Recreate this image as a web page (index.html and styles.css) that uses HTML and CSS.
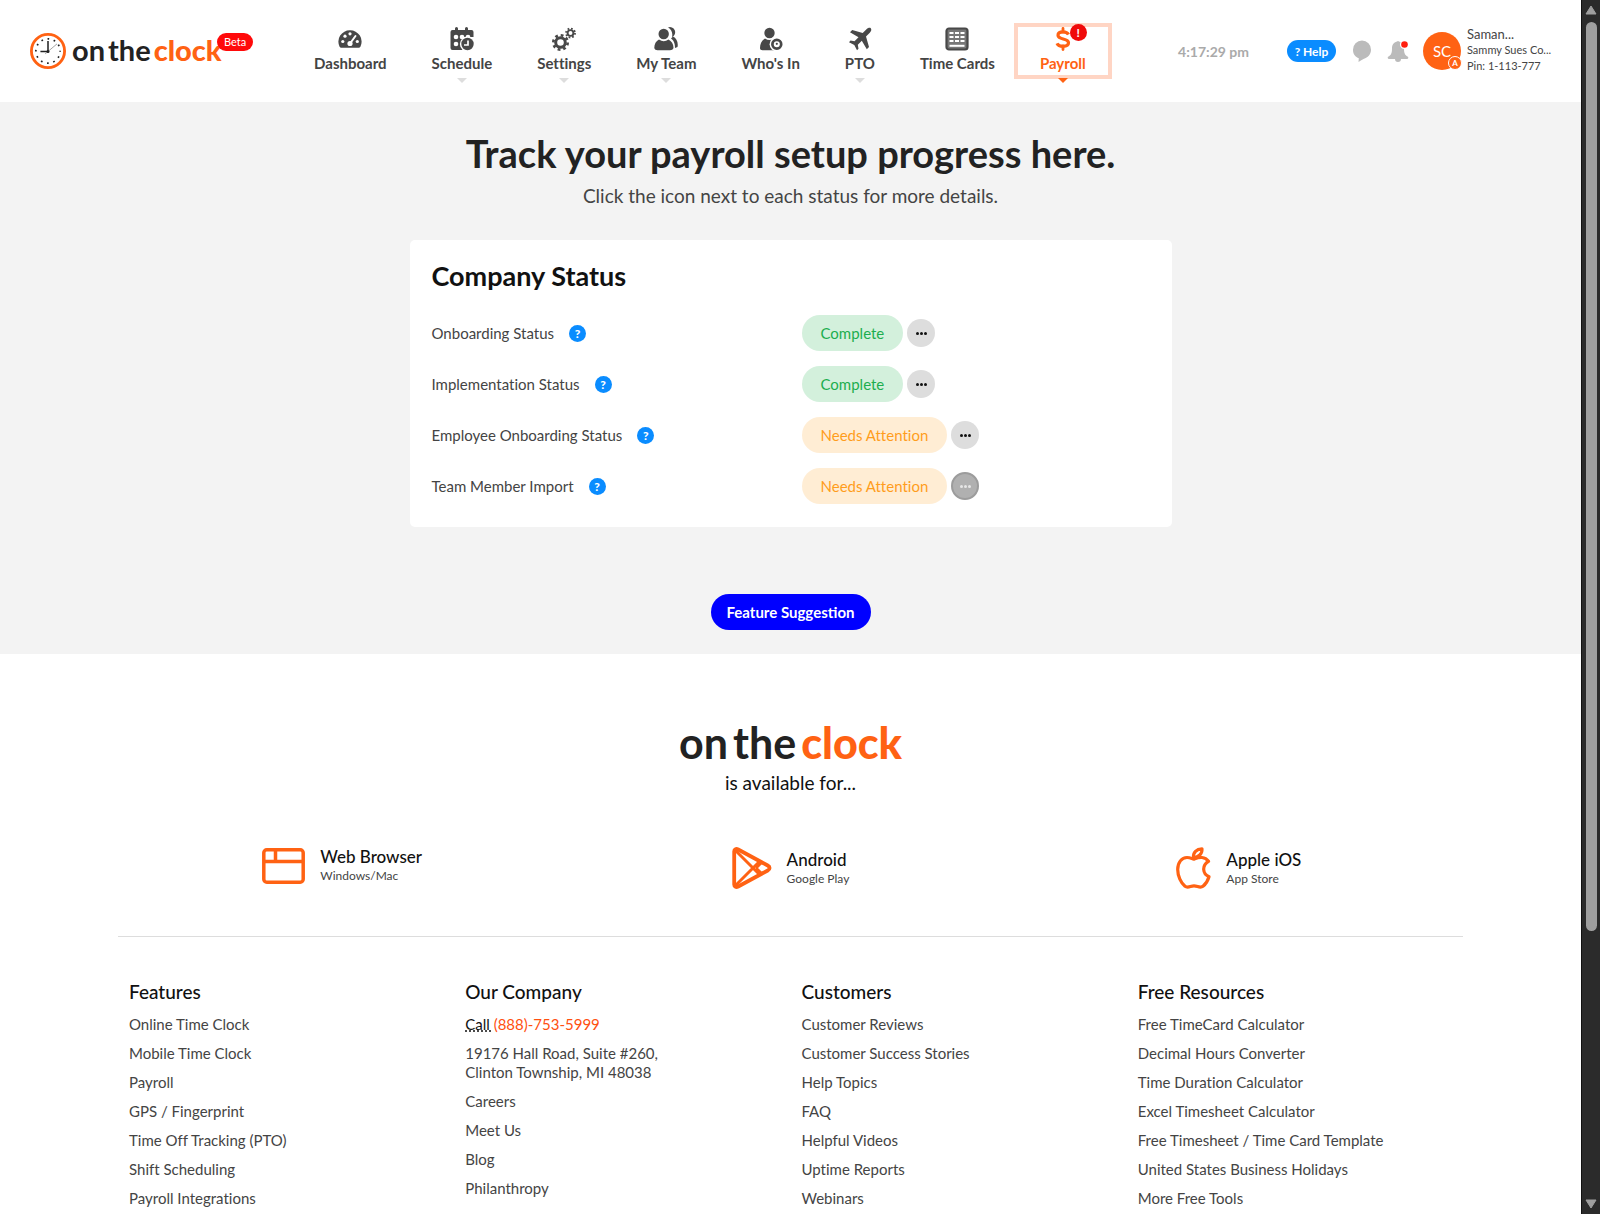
FILE: index.html
```html
<!DOCTYPE html>
<html lang="en">
<head>
    <meta charset="UTF-8">
    <meta name="viewport" content="width=device-width, initial-scale=1.0">
    <title>OnTheClock - Payroll</title>
    <link rel="stylesheet" href="styles.css">
</head>
<body>
    <div class="page">
        <header class="header">
            <a href="#" class="logo">
                <svg class="logo-clock" viewBox="0 0 38 38">
                    <circle cx="19" cy="19" r="17.5" fill="#fff" stroke="#ff6213" stroke-width="3"/>
                    <circle cx="19" cy="19" r="12.8" fill="none" stroke="#222" stroke-width="1.8" stroke-dasharray="1.8 4.902" stroke-dashoffset="0.9"/>
                    <path d="M19 20V8.500M20 19.500H11" fill="none" stroke="#222" stroke-width="1.6"/>
                    <path d="M16 22L28.500 11.500" stroke="#888" stroke-width="0.8"/>
                    <circle cx="19" cy="19.500" r="1.600" fill="#222"/>
                </svg>
                <span class="wordmark"><span>on</span> <span>the</span> <b>clock</b></span>
                <span class="beta">Beta</span>
            </a>

            <nav class="nav">
                <a href="#" class="nav-item">
                    <svg viewBox="0 0 24 24">
                        <path d="M3.300 20.800a2 2 0 0 1-1.700-1A11.400 11.400 0 0 1 12 3.300 11.400 11.400 0 0 1 22.400 19.800a2 2 0 0 1-1.700 1z" fill="#484848"/>
                        <g fill="#fff"><circle cx="4.800" cy="14.500" r="1.600"/><circle cx="7" cy="9.200" r="1.600"/><circle cx="12" cy="6.800" r="1.600"/><circle cx="19.300" cy="14.500" r="1.600"/><circle cx="12" cy="16.500" r="2.600"/></g>
                        <path d="M12 16.500L17.500 9" stroke="#fff" stroke-width="2" stroke-linecap="round"/>
                    </svg>
                    <span>Dashboard</span>
                </a>
                <a href="#" class="nav-item has-menu">
                    <svg viewBox="0 0 24 24">
                        <path d="M2.500 3H5V1.500a1.500 1.500 0 0 1 3 0V3h7V1.500a1.500 1.500 0 0 1 3 0V3h3.500A2 2 0 0 1 23.500 5v5H.5V5a2 2 0 0 1 2-2zM.5 9h12v14h-10a2 2 0 0 1-2-2z" fill="#484848"/>
                        <g fill="#fff"><circle cx="6" cy="10" r="2.300"/><circle cx="12" cy="10" r="2.300"/><circle cx="6" cy="17" r="2.300"/><circle cx="18" cy="10" r="2.300"/></g>
                        <circle cx="17.500" cy="17" r="7.600" fill="#fff"/>
                        <circle cx="17.500" cy="17" r="6.200" fill="#484848"/>
                        <path d="M18 13.500V18H14" fill="none" stroke="#fff" stroke-width="1.700"/>
                    </svg>
                    <span>Schedule</span>
                </a>
                <a href="#" class="nav-item has-menu">
                    <svg viewBox="0 0 24 24" fill="none" stroke="#484848">
                        <circle cx="8.500" cy="15.500" r="4.800" stroke-width="3"/>
                        <circle cx="8.500" cy="15.500" r="7.200" stroke-width="2.600" stroke-dasharray="2.800 2.855"/>
                        <circle cx="18.500" cy="6" r="2.900" stroke-width="1.900"/>
                        <circle cx="18.500" cy="6" r="4.500" stroke-width="1.800" stroke-dasharray="1.700 1.834"/>
                    </svg>
                    <span>Settings</span>
                </a>
                <a href="#" class="nav-item has-menu">
                    <svg viewBox="0 0 24 24" fill="#484848">
                        <path d="M14 .5a5 5 0 0 1 4 9.500c1-4-.5-7.500-4-9.500zM19 9.500c3.500 1.500 5.500 6 4.500 10.500l-2.500 1c0-3-.5-7-4-9.500z"/>
                        <circle cx="9.700" cy="7" r="5.200"/>
                        <path d="M5 12.500a8 8 0 0 0 9.500 0c3 1.500 5 4.500 5 8.500-.5 1.500-2 2.200-3.500 2.200H3.500C2 23.200.7 22.500.3 21c0-4 1.700-7 4.700-8.500z"/>
                    </svg>
                    <span>My Team</span>
                </a>
                <a href="#" class="nav-item">
                    <svg viewBox="0 0 24 24">
                        <g fill="#484848">
                            <circle cx="10.500" cy="6" r="5.200"/>
                            <path d="M6 11.500a8 8 0 0 0 9 0l3 2v9.700H3.500C2 23.200 1 22.500 1 21c0-4 2-8 5-9.500z"/>
                        </g>
                        <circle cx="17.800" cy="17.200" r="7.200" fill="#fff"/>
                        <circle cx="17.800" cy="17.200" r="4.400" fill="none" stroke="#484848" stroke-width="2.700"/>
                        <circle cx="17.800" cy="16.800" r="1.100" fill="#484848"/>
                    </svg>
                    <span>Who's In</span>
                </a>
                <a href="#" class="nav-item has-menu">
                    <svg viewBox="0 0 24 24">
                        <path d="M22.800 1.200c1 1.200.4 3-1 4.500L18 9.500 21 20l-2.200 2.200-5-8.500-4 4 .7 4L9 23.300 6.300 18 1 15.300 2.500 13.500l4 .8 4-4L2 5.200 4.200 3 14.700 6l3.800-3.800c1.400-1.400 3.200-2 4.300-1z" fill="#484848"/>
                    </svg>
                    <span>PTO</span>
                </a>
                <a href="#" class="nav-item">
                    <svg viewBox="0 0 24 24">
                        <rect x="1.500" y="1.500" width="21" height="21" rx="2.500" fill="#777" stroke="#484848" stroke-width="2.200"/>
                        <path d="M4.500 6h15M4.500 10h15M4.500 14h15" stroke="#fff" stroke-width="2.200" stroke-dasharray="4 1.500"/>
                        <path d="M4.500 18.800h15" stroke="#fff" stroke-width="2"/>
                    </svg>
                    <span>Time Cards</span>
                </a>
                <a href="#" class="nav-item has-menu active">
                    <svg viewBox="0 0 24 24" fill="none" stroke="#ff6213">
                        <path d="M17.500 7.500C16.500 5.500 14.500 4.800 12 4.800c-3 0-5 1.300-5 3.500 0 5 10.500 2.300 10.500 7.500 0 2.200-2.300 3.500-5.500 3.500-2.800 0-5-.8-6-3" stroke-width="3.200"/>
                        <path d="M12 1.500V5M12 19v3.500" stroke-width="2.800" stroke-linecap="round"/>
                    </svg>
                    <span>Payroll</span>
                    <span class="alert">!</span>
                </a>
            </nav>

            <div class="account">
                <time class="clock">4:17:29 pm</time>
                <button class="help" type="button">? Help</button>
                <button class="icon-button" type="button" aria-label="Chat">
                    <svg viewBox="0 0 22 24" fill="#bbb"><path d="M11 1.500a9 9 0 0 1 9 9.300c0 5-3.500 7.700-7 9-2 1-3.500 2-5.500 3.200l.3-3.800C4.500 18 2 15.500 2 10.800A9 9 0 0 1 11 1.500z"/></svg>
                </button>
                <button class="icon-button" type="button" aria-label="Notifications">
                    <svg viewBox="0 0 22 24"><path d="M10 2.500a1.500 1.500 0 0 1 2 0c3.500.8 5 3.500 5 7 0 5 1 6.500 3.500 8a1.300 1.300 0 0 1-.5 2.500h-6a3 3 0 0 1-6 0H2a1.300 1.300 0 0 1-.5-2.500c2.500-1.500 3.500-3 3.500-8 0-3.500 1.500-6.200 5-7z" fill="#bbb"/><circle cx="17.500" cy="5.500" r="4.500" fill="#fff"/><circle cx="17.500" cy="5.500" r="3.300" fill="#ff1e0e"/></svg>
                </button>
                <a href="#" class="user">
                    <span class="avatar">SC<span class="avatar-badge">A</span></span>
                    <span class="user-text">
                        <span class="user-name">Saman...</span>
                        <span>Sammy Sues Co...</span>
                        <span>Pin: 1-113-777</span>
                    </span>
                </a>
            </div>
        </header>

        <main class="main">
            <h1>Track your payroll setup progress here.</h1>
            <p class="subtitle">Click the icon next to each status for more details.</p>

            <section class="card">
                <h2>Company Status</h2>
                <div class="status-row">
                    <div class="status-label">Onboarding Status <button class="tip" type="button">?</button></div>
                    <span class="pill complete">Complete</span>
                    <button class="more" type="button" aria-label="Details"><i></i><i></i><i></i></button>
                </div>
                <div class="status-row">
                    <div class="status-label">Implementation Status <button class="tip" type="button">?</button></div>
                    <span class="pill complete">Complete</span>
                    <button class="more" type="button" aria-label="Details"><i></i><i></i><i></i></button>
                </div>
                <div class="status-row">
                    <div class="status-label">Employee Onboarding Status <button class="tip" type="button">?</button></div>
                    <span class="pill attention">Needs Attention</span>
                    <button class="more" type="button" aria-label="Details"><i></i><i></i><i></i></button>
                </div>
                <div class="status-row">
                    <div class="status-label">Team Member Import <button class="tip" type="button">?</button></div>
                    <span class="pill attention">Needs Attention</span>
                    <button class="more pressed" type="button" aria-label="Details"><i></i><i></i><i></i></button>
                </div>
            </section>

            <button class="suggest" type="button">Feature Suggestion</button>
        </main>

        <footer class="footer">
            <div class="wordmark wordmark-large"><span>on</span> <span>the</span> <b>clock</b></div>
            <p class="available">is available for...</p>

            <div class="platforms">
                <a href="#" class="platform">
                    <svg class="browser-icon" viewBox="0 0 43 36" fill="none" stroke="#ff6213" stroke-width="3.500">
                        <rect x="1.800" y="1.800" width="39.400" height="32.400" rx="3"/>
                        <path d="M2 13.500h39M13.500 2v11"/>
                    </svg>
                    <span><strong>Web Browser</strong><small>Windows/Mac</small></span>
                </a>
                <a href="#" class="platform">
                    <svg class="store-icon" viewBox="0 0 40 42" fill="none" stroke="#ff6213" stroke-width="3.800" stroke-linejoin="round">
                        <path d="M2.200 4.500c0-2.500 2-3 4-2l29.500 16c2.500 1.300 2.500 3.700 0 5l-29.500 16c-2 1-4 .5-4-2z"/>
                        <path d="M4 4l23.500 23.500M4 38l23.500-23.500M24 21l6-6M24 21l6 6" stroke-width="3"/>
                    </svg>
                    <span><strong>Android</strong><small>Google Play</small></span>
                </a>
                <a href="#" class="platform">
                    <svg class="apple-icon" viewBox="0 0 35 42" fill="none" stroke="#ff6213" stroke-width="3.200" stroke-linejoin="round">
                        <path d="M18 12.200c3-1.200 4.500-2 8-1.700 3 .3 5 1.700 6.500 3.800-3.500 2.200-5 4.700-4.800 8.200.2 3.500 2 5.800 5.300 7.300-1 3.500-3.500 7.500-6 9.500-3 2.300-5.500-.5-9-.5s-6 2.800-9 .5C5 36 1.700 29 1.700 22.500c0-7 4-12 9.300-12 3 0 4.500 1 7 1.700z"/>
                        <path d="M17.500 10.500c-.5-5 3-8.500 8.500-8.700 .3 5-3.300 8.500-8.500 8.700z"/>
                    </svg>
                    <span><strong>Apple iOS</strong><small>App Store</small></span>
                </a>
            </div>

            <div class="footer-columns">
                <div>
                    <h3>Features</h3>
                    <ul>
                        <li><a href="#">Online Time Clock</a></li>
                        <li><a href="#">Mobile Time Clock</a></li>
                        <li><a href="#">Payroll</a></li>
                        <li><a href="#">GPS / Fingerprint</a></li>
                        <li><a href="#">Time Off Tracking (PTO)</a></li>
                        <li><a href="#">Shift Scheduling</a></li>
                        <li><a href="#">Payroll Integrations</a></li>
                    </ul>
                </div>
                <div>
                    <h3>Our Company</h3>
                    <ul>
                        <li><abbr title="Phone">Call </abbr><a href="#" class="phone">(888)-753-5999</a></li>
                        <li>19176 Hall Road, Suite #260,<br>Clinton Township, MI 48038</li>
                        <li><a href="#">Careers</a></li>
                        <li><a href="#">Meet Us</a></li>
                        <li><a href="#">Blog</a></li>
                        <li><a href="#">Philanthropy</a></li>
                    </ul>
                </div>
                <div>
                    <h3>Customers</h3>
                    <ul>
                        <li><a href="#">Customer Reviews</a></li>
                        <li><a href="#">Customer Success Stories</a></li>
                        <li><a href="#">Help Topics</a></li>
                        <li><a href="#">FAQ</a></li>
                        <li><a href="#">Helpful Videos</a></li>
                        <li><a href="#">Uptime Reports</a></li>
                        <li><a href="#">Webinars</a></li>
                    </ul>
                </div>
                <div>
                    <h3>Free Resources</h3>
                    <ul>
                        <li><a href="#">Free TimeCard Calculator</a></li>
                        <li><a href="#">Decimal Hours Converter</a></li>
                        <li><a href="#">Time Duration Calculator</a></li>
                        <li><a href="#">Excel Timesheet Calculator</a></li>
                        <li><a href="#">Free Timesheet / Time Card Template</a></li>
                        <li><a href="#">United States Business Holidays</a></li>
                        <li><a href="#">More Free Tools</a></li>
                    </ul>
                </div>
            </div>
        </footer>
    </div>

    <div class="scrollbar" aria-hidden="true">
        <svg viewBox="0 0 12 10"><path d="M6 1l5 8H1z" fill="#9f9f9f" stroke="#9f9f9f" stroke-linejoin="round"/></svg>
        <div class="track"><div class="thumb"></div></div>
        <svg viewBox="0 0 12 10"><path d="M6 9l5-8H1z" fill="#9f9f9f" stroke="#9f9f9f" stroke-linejoin="round"/></svg>
    </div>
</body>
</html>
```
FILE: styles.css
```css
* {
    box-sizing: border-box;
}
body {
    display: flex;
    height: 100vh;
    margin: 0;
    overflow: hidden;
    font-family: Lato, "Open Sans", sans-serif;
    font-size: 15px;
    font-variant-ligatures: none;
    line-height: 19px;
    color: #444;
    background: #fff;
}
a {
    color: inherit;
    text-decoration: none;
}
button {
    padding: 0;
    border: none;
    font-family: inherit;
    cursor: pointer;
}
h1, h2, h3, p, ul {
    margin: 0;
}
.page {
    flex: 1;
    min-width: 0;
    overflow: hidden;
}

/* Header */
.header {
    display: flex;
    align-items: center;
    justify-content: space-between;
    height: 102px;
    padding: 0 30px;
}
.logo {
    position: relative;
    display: flex;
    align-items: center;
    gap: 6px;
}
.logo-clock {
    width: 36px;
    height: 38px;
}
.wordmark {
    display: flex;
    gap: 3px;
    padding-bottom: 2px;
    font-size: 29px;
    line-height: 36px;
    font-weight: 700;
    color: #222;
    white-space: nowrap;
}
.wordmark b {
    color: #ff6213;
}
.beta {
    position: absolute;
    top: 1px;
    left: 187px;
    padding: 0 7px;
    border-radius: 9px;
    background: #ff0a0a;
    color: #fff;
    font-size: 11px;
    line-height: 18px;
}
.nav {
    display: flex;
    gap: 45px;
}
.nav-item {
    position: relative;
    display: flex;
    flex-direction: column;
    align-items: center;
    gap: 3px;
    padding-bottom: 2px;
    font-weight: 700;
    white-space: nowrap;
}
.nav-item svg {
    width: 24px;
    height: 24px;
}
.has-menu::after {
    content: "";
    position: absolute;
    bottom: -8px;
    border: 5px solid transparent;
    border-top-color: #ddd;
    border-bottom: none;
}
.active {
    margin: 0 -22px;
    padding: 0 22px 2px;
    color: #ff6213;
    outline: 4px solid #ffd5c4;
}
.active::after {
    border-top-color: #ff6213;
}
.alert {
    position: absolute;
    top: -3px;
    right: 21px;
    width: 17px;
    border-radius: 50%;
    background: #f00a0a;
    color: #fff;
    font-size: 12px;
    line-height: 17px;
    text-align: center;
}
.account {
    display: flex;
    align-items: center;
}
.clock {
    margin-right: 38px;
    color: #aaa;
    font-size: 14px;
    font-weight: 700;
}
.help {
    width: 49px;
    height: 22px;
    margin-right: 15px;
    border-radius: 11px;
    background: #0a8cff;
    color: #fff;
    font-size: 12px;
    font-weight: 700;
}
.icon-button {
    width: 22px;
    height: 24px;
    margin-right: 14px;
    background: none;
}
.user {
    display: flex;
    align-items: center;
    gap: 6px;
}
.avatar {
    position: relative;
    width: 38px;
    border-radius: 50%;
    background: #ff6213;
    color: #fff;
    line-height: 38px;
    text-align: center;
}
.avatar-badge {
    position: absolute;
    right: -1px;
    bottom: 0;
    width: 14px;
    border: 1px solid #fff;
    border-radius: 50%;
    background: #ff6213;
    font-size: 8px;
    font-weight: 700;
    line-height: 12px;
}
.user-text {
    display: flex;
    flex-direction: column;
    width: 84px;
    padding-bottom: 2px;
    font-size: 11px;
    line-height: 16px;
    white-space: nowrap;
}
.user-name {
    font-size: 13px;
}

/* Payroll status */
.main {
    display: flex;
    flex-direction: column;
    align-items: center;
    padding: 28px 20px 24px;
    background: #f3f3f3;
}
h1 {
    color: #222;
    font-size: 38px;
    line-height: 46px;
}
.subtitle {
    margin: 8px 0 32px;
    font-size: 19px;
    line-height: 24px;
}
.card {
    width: 100%;
    max-width: 762px;
    padding: 20px 22px 23px;
    border-radius: 5px;
    background: #fff;
}
h2 {
    margin-bottom: 23px;
    color: #111;
    font-size: 27px;
    line-height: 32px;
}
.status-row {
    display: flex;
    align-items: center;
    gap: 4px;
}
.status-row + .status-row {
    margin-top: 15px;
}
.status-label {
    display: flex;
    align-items: center;
    gap: 15px;
    width: 50%;
    padding-right: 20px;
    margin-right: 7px;
}
.tip {
    width: 17px;
    height: 17px;
    border-radius: 50%;
    background: #0a8cff;
    color: #fff;
    font-size: 12px;
    font-weight: 900;
    line-height: 17px;
}
.pill {
    padding: 0 19px;
    border-radius: 18px;
    line-height: 36px;
}
.complete {
    background: #d3f0dc;
    color: #1cae4f;
}
.attention {
    background: #ffedd4;
    color: #ff9d1c;
}
.more {
    display: flex;
    align-items: center;
    justify-content: center;
    gap: 1px;
    width: 28px;
    height: 28px;
    border-radius: 50%;
    background: #ddd;
    color: #111;
}
.more i {
    width: 3px;
    height: 3px;
    border-radius: 50%;
    background: currentColor;
}
.pressed {
    border: 2px solid #9c9c9c;
    background: #b0b0b0;
    color: #e6e6e6;
}
.suggest {
    width: 160px;
    height: 36px;
    margin-top: 67px;
    border-radius: 18px;
    background: #0000ff;
    color: #fff;
    font-size: 15px;
    font-weight: 700;
}

/* Footer */
.footer {
    max-width: 1345px;
    margin: 0 auto;
    padding-top: 64px;
}
.wordmark-large {
    justify-content: center;
    gap: 5px;
    padding-bottom: 3px;
    font-size: 43px;
    line-height: 50px;
}
.available {
    color: #111;
    font-size: 19px;
    line-height: 24px;
    text-align: center;
}
.platforms {
    display: grid;
    grid-template-columns: repeat(3, 1fr);
    align-items: start;
    height: 90px;
    margin-top: 52px;
    border-bottom: 1px solid #ddd;
}
.platform {
    display: flex;
    align-items: center;
    justify-content: center;
    gap: 15px;
}
.browser-icon {
    width: 43px;
    height: 36px;
}
.store-icon {
    width: 40px;
    height: 42px;
}
.apple-icon {
    width: 35px;
    height: 42px;
}
.platform strong {
    display: block;
    color: #111;
    font-size: 17px;
    font-weight: 500;
    line-height: 20px;
}
.platform small {
    display: block;
    font-size: 12px;
    line-height: 17px;
}
.footer-columns {
    display: grid;
    grid-template-columns: repeat(4, 1fr);
    padding-top: 43px;
}
.footer-columns > div {
    padding: 0 11px;
}
h3 {
    color: #111;
    font-size: 19px;
    font-weight: 500;
    line-height: 24px;
}
ul {
    padding: 11px 0 0;
    list-style: none;
}
li {
    margin-bottom: 10px;
}
abbr {
    color: #111;
}
.phone {
    color: #ff5010;
}

/* Scrollbar */
.scrollbar {
    display: flex;
    flex-direction: column;
    align-items: center;
    width: 19px;
    padding: 5px 0;
    border-left: 1px solid #111;
    background: #2b2b2b;
}
.scrollbar svg {
    width: 12px;
    height: 10px;
}
.track {
    flex: 1;
    padding: 7px 0 12px;
}
.thumb {
    width: 11px;
    height: 78%;
    border-radius: 6px;
    background: #9f9f9f;
}
```
